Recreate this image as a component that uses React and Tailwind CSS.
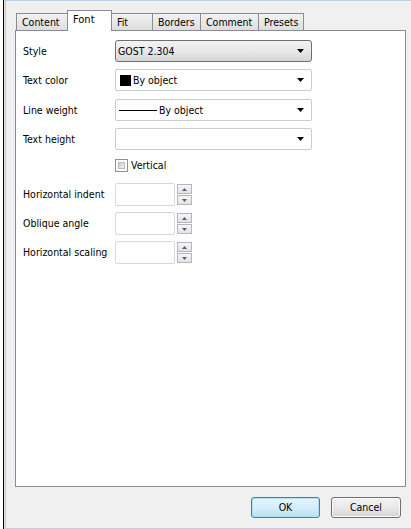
import React from 'react'

const tabs = [
  { name: 'Content', w: 'w-[52px]' },
  { name: 'Font', w: 'w-[45px]', active: true },
  { name: 'Fit', w: 'w-[42px]' },
  { name: 'Borders', w: 'w-[49px]' },
  { name: 'Comment', w: 'w-[59px]' },
  { name: 'Presets', w: 'w-[46px]' },
]

const Arrow = () => (
  <svg width="7" height="4" viewBox="0 0 7 4" className="shrink-0">
    <polygon points="0,0 7,0 3.5,4" fill="#000" />
  </svg>
)

const Combo = ({ children, raised, className = '' }) => (
  <div
    className={
      'w-[197px] h-[22px] flex items-center pr-[7px] ' +
      (raised
        ? 'border border-[#707070] rounded-[3px] bg-gradient-to-b from-[#f2f2f2] via-[#e9e9e9] to-[#d6d6d6] pl-[2px] '
        : 'border border-[#c9ccd2] rounded-[2px] bg-white pl-[3px] ') +
      className
    }
  >
    <div className="flex-1 flex items-center">{children}</div>
    <Arrow />
  </div>
)

const SpinBtn = ({ up }) => (
  <div className="w-[15px] h-[10px] border border-[#b4b6b9] bg-gradient-to-b from-[#f6f6f6] to-[#e2e2e2] flex items-center justify-center">
    <svg width="5" height="3" viewBox="0 0 5 3">
      <polygon points={up ? '0,3 5,3 2.5,0' : '0,0 5,0 2.5,3'} fill="#4d6185" />
    </svg>
  </div>
)

const Spinner = ({ label, className = '' }) => (
  <div className={'flex items-center h-[23px] ' + className}>
    <div className="w-[92px]">{label}</div>
    <div className="w-[60px] h-[23px] border border-[#d5d8dd] rounded-[2px] bg-white" />
    <div className="ml-[2px] flex flex-col gap-[1px]">
      <SpinBtn up />
      <SpinBtn />
    </div>
  </div>
)

const Row = ({ label, children, className = '' }) => (
  <div className={'flex items-center ' + className}>
    <div className="w-[92px]">{label}</div>
    {children}
  </div>
)

export default function App() {
  return (
    <div
      className="w-[411px] h-[529px] bg-white flex pl-[3px] text-[10.5px] leading-[15px] text-black overflow-hidden"
      style={{ fontFamily: '"DejaVu Sans Condensed", "Liberation Sans", Arial, sans-serif' }}
    >
      <div className="w-px bg-black" />
      <div className="w-px bg-[#e4e4e4]" />
      <div className="flex-1 flex flex-col bg-[#f0f0f0] border-l border-t border-b border-[#b8d2ea]">
        <div className="pl-[9px] pt-[9px] pr-[5px]">
          {/* tab strip */}
          <div className="flex items-end h-[20px] pl-[1px]">
            {tabs.map((t, i) =>
              t.active ? (
                <div
                  key={t.name}
                  className={t.w + ' -ml-px relative z-10 h-[21px] -mb-px bg-white border border-b-0 border-[#898c95] pl-[5px] pt-[1px] text-[11px]'}
                >
                  {t.name}
                </div>
              ) : (
                <div
                  key={t.name}
                  className={t.w + (i > 0 ? ' -ml-px' : '') + ' h-[17px] border border-b-0 border-[#898c95] bg-gradient-to-b from-[#f2f2f2] to-[#dedede] pl-[5px] pt-[1px]'}
                >
                  {t.name}
                </div>
              )
            )}
          </div>

          {/* tab panel */}
          <div className="h-[457px] border border-[#898c95] bg-white pl-[7px] pt-[9px]">
            <Row label="Style">
              <Combo raised>GOST 2.304</Combo>
            </Row>
            <Row label="Text color" className="mt-[7px]">
              <Combo>
                <span className="w-[11px] h-[11px] bg-black ml-[1px] mr-[2px]" />
                By object
              </Combo>
            </Row>
            <Row label="Line weight" className="mt-[8px]">
              <Combo>
                <span className="w-[38px] h-px bg-black mr-[2px]" />
                By object
              </Combo>
            </Row>
            <Row label="Text height" className="mt-[7px]">
              <Combo />
            </Row>
            <Row className="mt-[9px] h-[13px]">
              <div className="w-[13px] h-[13px] border border-[#8f8f8f] bg-white p-[2px]">
                <div className="w-full h-full bg-gradient-to-br from-[#cbcbcb] to-[#f4f4f4] border border-[#b9b9b9]" />
              </div>
              <span className="ml-[3px]">Vertical</span>
            </Row>
            <Spinner label="Horizontal indent" className="mt-[11px]" />
            <Spinner label="Oblique angle" className="mt-[6px]" />
            <Spinner label="Horizontal scaling" className="mt-[6px]" />
          </div>
        </div>

        {/* buttons */}
        <div className="flex justify-end gap-[11px] pr-[10px] mt-[10px]">
          <button className="w-[69px] h-[21px] rounded-[3px] border border-[#3c7fb1] bg-gradient-to-b from-[#e8f5fc] via-[#d6eefa] to-[#b9e0f5] shadow-[inset_0_0_0_1px_#aee3fa]">
            OK
          </button>
          <button className="w-[70px] h-[21px] rounded-[3px] border border-[#707070] bg-gradient-to-b from-[#f2f2f2] via-[#e9e9e9] to-[#d4d4d4] shadow-[inset_0_0_0_1px_#fbfbfb]">
            Cancel
          </button>
        </div>
      </div>
    </div>
  )
}
